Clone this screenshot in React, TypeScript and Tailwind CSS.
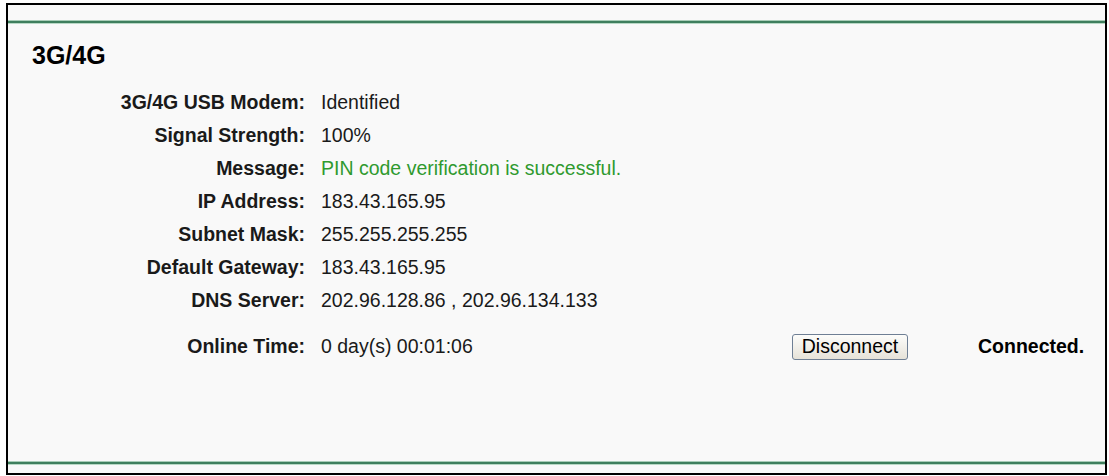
import * as React from 'react';

const rows: { label: string; value: string; green?: boolean }[] = [
  { label: '3G/4G USB Modem:', value: 'Identified' },
  { label: 'Signal Strength:', value: '100%' },
  { label: 'Message:', value: 'PIN code verification is successful.', green: true },
  { label: 'IP Address:', value: '183.43.165.95' },
  { label: 'Subnet Mask:', value: '255.255.255.255' },
  { label: 'Default Gateway:', value: '183.43.165.95' },
  { label: 'DNS Server:', value: '202.96.128.86 , 202.96.134.133' },
];

function Rule() {
  return (
    <div className="w-full">
      <div className="h-[1px] bg-[#a9cdb8]"></div>
      <div className="h-[2px] bg-[#3f7f5e]"></div>
      <div className="h-[1px] bg-[#b9d9c6]"></div>
    </div>
  );
}

export default function App() {
  return (
    <div
      className="w-[1109px] h-[476px] bg-white pl-[6px] pt-[3px] text-[#1a1a1a]"
      style={{ fontFamily: '"Liberation Sans", Arial, sans-serif' }}
    >
      <div className="w-[1101px] h-[472px] border-2 border-black bg-[#f9f9f9] flex flex-col">
        {/* top line */}
        <div className="mt-[15px]">
          <Rule />
        </div>

        {/* section title */}
        <h1 className="mt-[16px] pl-[24px] text-[25px] leading-[30px] font-bold text-black">
          3G/4G
        </h1>

        {/* status table */}
        <div className="mt-[16px] flex flex-col">
          {rows.map((r) => (
            <div key={r.label} className="flex h-[33px] items-center text-[19.5px]">
              <div className="w-[297px] text-right font-bold">{r.label}</div>
              <div className={`pl-[16px] ${r.green ? 'text-[#2f9a2f]' : ''}`}>{r.value}</div>
            </div>
          ))}
          <div className="mt-[9px] flex h-[42px] items-center text-[19.5px]">
            <div className="w-[297px] text-right font-bold">Online Time:</div>
            <div className="pl-[16px] w-[487px] shrink-0">0 day(s) 00:01:06</div>
            <button
              type="button"
              className="h-[26px] w-[116px] rounded-[3px] border border-[#6f7f94] bg-gradient-to-b from-[#fdfdfb] to-[#e6e2d8] text-[19.5px] leading-none text-black"
            >
              Disconnect
            </button>
            <div className="ml-[70px] font-bold text-black">Connected.</div>
          </div>
        </div>

        <div className="mt-auto mb-[8px]">
          <Rule />
        </div>
      </div>
    </div>
  );
}
